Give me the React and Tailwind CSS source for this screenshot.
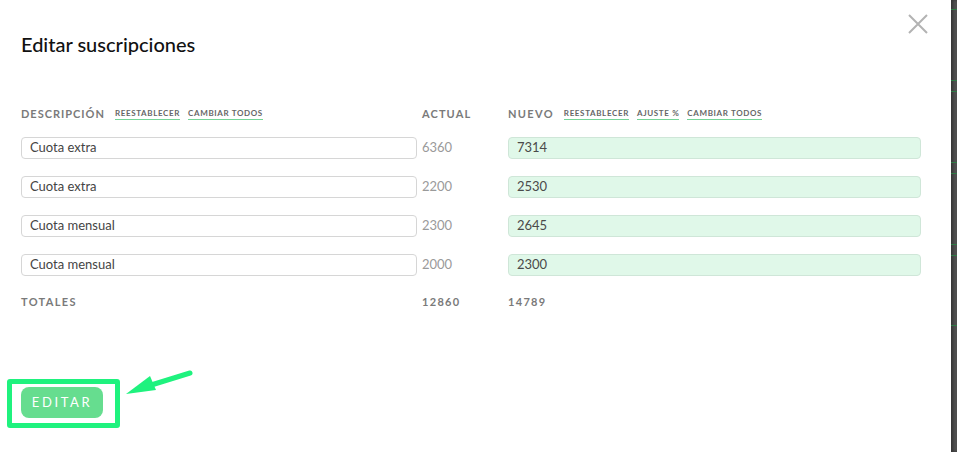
import React from 'react';

const rows = [
  { desc: 'Cuota extra', actual: '6360', nuevo: '7314' },
  { desc: 'Cuota extra', actual: '2200', nuevo: '2530' },
  { desc: 'Cuota mensual', actual: '2300', nuevo: '2645' },
  { desc: 'Cuota mensual', actual: '2000', nuevo: '2300' },
];

const MiniLink = ({ children }) => (
  <span className="text-[8px] font-bold tracking-[0.08em] text-[#666] border-b border-[#74d496] leading-[10px] pb-[1px]">
    {children}
  </span>
);

const App = () => {
  return (
    <div className="flex w-[957px] h-[452px] bg-white overflow-hidden" style={{ fontFamily: 'Lato, "Open Sans", sans-serif' }}>
      {/* modal */}
      <div className="w-[951px] h-full flex flex-col">
        <div className="flex justify-between items-start">
          <h1 className="ml-[21px] mt-[30px] text-[20px] leading-[28px] font-medium text-[#111]">Editar suscripciones</h1>
          <svg className="mt-[14px] mr-[23px]" width="20" height="20" viewBox="0 0 20 20">
            <path d="M1 1 L19 19 M19 1 L1 19" stroke="#b3b3b3" strokeWidth="2" />
          </svg>
        </div>

        <div className="ml-[21px] mt-[48px] grid grid-cols-[396px_81px_413px] gap-x-[5px]">
          {/* header */}
          <div className="flex items-center gap-2 h-4">
            <span className="text-[11px] font-bold tracking-[0.09em] text-[#7a7a7a] mr-[2px]">DESCRIPCIÓN</span>
            <MiniLink>REESTABLECER</MiniLink>
            <MiniLink>CAMBIAR TODOS</MiniLink>
          </div>
          <div className="flex items-center h-4">
            <span className="text-[11px] font-bold tracking-[0.1em] text-[#7a7a7a]">ACTUAL</span>
          </div>
          <div className="flex items-center gap-2 h-4">
            <span className="text-[11px] font-bold tracking-[0.12em] text-[#7a7a7a] mr-[2px]">NUEVO</span>
            <MiniLink>REESTABLECER</MiniLink>
            <MiniLink>AJUSTE %</MiniLink>
            <MiniLink>CAMBIAR TODOS</MiniLink>
          </div>

          {rows.map((r, i) => (
            <React.Fragment key={i}>
              <div className={`h-[22px] border border-[#d6d6d6] rounded-[4px] flex items-center pl-[8px] text-[13px] text-[#444] ${i === 0 ? 'mt-[15px]' : 'mt-[17px]'}`}>
                {r.desc}
              </div>
              <div className={`h-[22px] flex items-center text-[13px] text-[#9a9a9a] ${i === 0 ? 'mt-[15px]' : 'mt-[17px]'}`}>
                {r.actual}
              </div>
              <div className={`h-[22px] border border-[#cfe6d8] bg-[#e0f8e9] rounded-[4px] flex items-center pl-[8px] text-[13px] text-[#4a4a4a] ${i === 0 ? 'mt-[15px]' : 'mt-[17px]'}`}>
                {r.nuevo}
              </div>
            </React.Fragment>
          ))}

          <div className="mt-[18px] h-4 flex items-center text-[11px] font-bold tracking-[0.12em] text-[#7a7a7a]">TOTALES</div>
          <div className="mt-[18px] h-4 flex items-center text-[11px] font-bold tracking-[0.12em] text-[#7a7a7a]">12860</div>
          <div className="mt-[18px] h-4 flex items-center text-[11px] font-bold tracking-[0.12em] text-[#7a7a7a]">14789</div>
        </div>

        <div className="mt-[69px] ml-[7px] flex items-start">
          <div className="border-[5px] border-[#1ff27e] rounded-[3px] pl-[9px] pr-[12px] pt-[3px] pb-[5px]">
            <button className="w-[82px] h-[31px] rounded-[8px] bg-[#66dd8f] text-white text-[13px] tracking-[0.2em] flex items-center justify-center">
              EDITAR
            </button>
          </div>
          <svg className="-mt-[10px] ml-[2px]" width="72" height="32" viewBox="0 0 72 32">
            <path d="M68 4 L26 17" stroke="#1ff27e" strokeWidth="5" strokeLinecap="round" />
            <path d="M4 25 L28 7 L34 21 Z" fill="#1ff27e" />
          </svg>
        </div>
      </div>

      {/* page behind */}
      <div className="w-[6px] h-full bg-[#505050] shadow-[inset_2px_0_3px_rgba(0,0,0,0.35)] flex flex-col">
        <div className="mt-[9px] h-px bg-[#2f7a45]" />
        <div className="mt-[70px] h-px bg-[#2f7a45]" />
        <div className="mt-[10px] h-px bg-[#2f7a45]" />
        <div className="mt-[70px] h-px bg-[#2f7a45]" />
        <div className="mt-[10px] h-px bg-[#2f7a45]" />
        <div className="mt-[70px] h-px bg-[#2f7a45]" />
        <div className="mt-[10px] h-px bg-[#2f7a45]" />
        <div className="mt-[69px] h-px bg-[#2f7a45]" />
      </div>
    </div>
  );
};

export default App;
